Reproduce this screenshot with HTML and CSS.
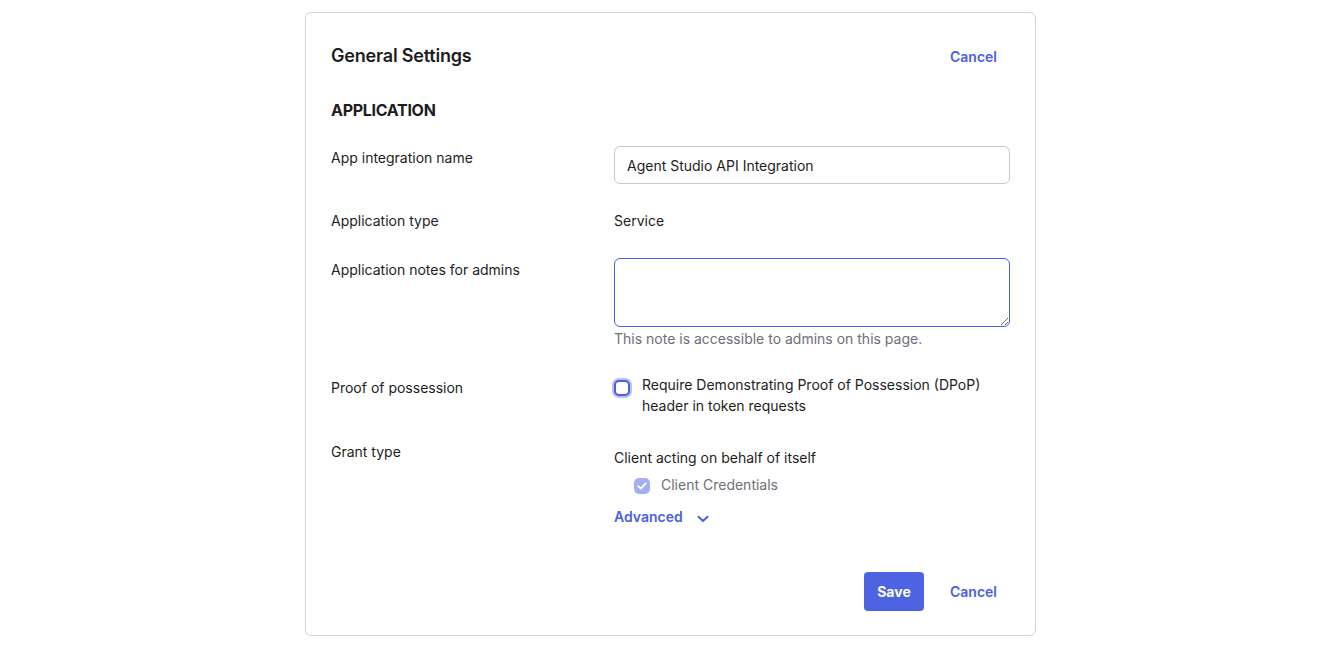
FILE: index.html
```html
<!DOCTYPE html>
<html lang="en">
<head>
<meta charset="utf-8">
<title>General Settings</title>
<link rel="stylesheet" href="styles.css">
</head>
<body>
<div class="card">
  <div class="card-header">
    <h2 class="title">General Settings</h2>
    <button class="link-btn">Cancel</button>
  </div>
  <h3 class="section">APPLICATION</h3>

  <div class="row row-name">
    <div class="label">App integration name</div>
    <div class="field"><input class="text-input" type="text" value="Agent Studio API Integration"></div>
  </div>

  <div class="row row-type">
    <div class="label">Application type</div>
    <div class="field value">Service</div>
  </div>

  <div class="row row-notes">
    <div class="label">Application notes for admins</div>
    <div class="field">
      <textarea class="textarea"></textarea>
      <div class="hint">This note is accessible to admins on this page.</div>
    </div>
  </div>

  <div class="row row-pop">
    <div class="label">Proof of possession</div>
    <div class="field check-row">
      <span class="checkbox"></span>
      <span class="check-text">Require Demonstrating Proof of Possession (DPoP) header in token requests</span>
    </div>
  </div>

  <div class="row row-grant">
    <div class="label">Grant type</div>
    <div class="field grant">
      <div class="grant-title">Client acting on behalf of itself</div>
      <div class="grant-item">
        <span class="checked">
          <svg width="10" height="8" viewBox="0 0 10 8"><path d="M1.2 4.2 L3.8 6.6 L8.8 1.4" fill="none" stroke="#fff" stroke-width="1.8" stroke-linecap="round" stroke-linejoin="round"/></svg>
        </span>
        <span class="grant-label">Client Credentials</span>
      </div>
      <div class="advanced">
        <span>Advanced</span>
        <svg width="12" height="8" viewBox="0 0 12 8"><path d="M1.5 1.8 L6 6 L10.5 1.8" fill="none" stroke="#4b5fe0" stroke-width="2" stroke-linecap="round" stroke-linejoin="round"/></svg>
      </div>
    </div>
  </div>

  <div class="footer">
    <button class="save-btn">Save</button>
    <button class="link-btn">Cancel</button>
  </div>
</div>
</body>
</html>
```

FILE: styles.css
```css
* { box-sizing: border-box; }

body {
  margin: 0;
  background: #ffffff;
  font-family: Inter, "Noto Sans", "Liberation Sans", sans-serif;
  color: #1d1d21;
  font-size: 14px;
}

.card {
  width: 731px;
  height: 624px;
  margin: 12px 0 0 305px;
  border: 1px solid #d4d4d9;
  border-radius: 6px;
  padding: 31px 25px 24px 25px;
  display: flex;
  flex-direction: column;
}

.card-header {
  display: flex;
  justify-content: space-between;
  align-items: center;
  height: 24px;
}

.title {
  margin: 0;
  font-size: 18px;
  font-weight: 600;
  line-height: 24px;
  letter-spacing: -0.2px;
}

.link-btn {
  background: none;
  border: none;
  font-family: inherit;
  font-size: 14px;
  font-weight: 600;
  color: #4b5fe0;
  padding: 0 13px 0 14px;
  height: 39px;
  cursor: pointer;
}

.section {
  margin: 32px 0 0 0;
  font-size: 16px;
  font-weight: 700;
  line-height: 20px;
  letter-spacing: -0.3px;
}

.row {
  display: grid;
  grid-template-columns: 283px 396px;
  align-items: start;
}

.label {
  line-height: 20px;
  padding-top: 1px;
}

.row-name { margin-top: 26px; }
.row-type { margin-top: 26px; }
.row-notes { margin-top: 27px; }
.row-pop { margin-top: 25px; }
.row-grant { margin-top: 25px; }

.row-name .label { padding-top: 2px; }
.row-notes .label { padding-top: 2px; }
.row-pop .label { padding-top: 4px; }

.text-input {
  width: 396px;
  height: 38px;
  border: 1px solid #c8c8cf;
  border-radius: 6px;
  padding: 0 12px;
  font-family: inherit;
  font-size: 14px;
  color: #1d1d21;
  display: block;
}

.value {
  line-height: 20px;
  padding-top: 1px;
}

.textarea {
  display: block;
  width: 396px;
  height: 69px;
  border: 1px solid #4b5fe0;
  border-radius: 6px;
  font-family: inherit;
  font-size: 14px;
  padding: 8px 12px;
  margin: 0;
}

.hint {
  margin-top: 2px;
  line-height: 20px;
  color: #6e6e78;
}

.check-row {
  display: flex;
  align-items: flex-start;
  gap: 12px;
}

.checkbox {
  flex: none;
  width: 16px;
  height: 16px;
  margin-top: 6px;
  border: 2px solid #4b5fe0;
  border-radius: 5px;
  box-shadow: 0 0 0 2px #b8c0f3;
  background: #fff;
}

.check-text {
  line-height: 21px;
  padding-right: 20px;
}

.grant {
  padding-top: 7px;
}

.grant-title {
  line-height: 20px;
}

.grant-item {
  display: flex;
  align-items: center;
  gap: 11px;
  margin-top: 7px;
  padding-left: 20px;
  height: 20px;
}

.checked {
  width: 16px;
  height: 16px;
  border-radius: 5px;
  background: #a4aef1;
  display: flex;
  align-items: center;
  justify-content: center;
  margin-top: 2px;
}

.grant-label {
  color: #6e6e78;
  line-height: 20px;
}

.advanced {
  margin-top: 12px;
  display: flex;
  align-items: center;
  gap: 14px;
  color: #4b5fe0;
  font-weight: 600;
  line-height: 20px;
}

.advanced svg { margin-top: 3px; }

.footer {
  margin-top: auto;
  display: flex;
  justify-content: flex-end;
  gap: 12px;
}

.save-btn {
  width: 60px;
  height: 39px;
  border: none;
  border-radius: 4px;
  background: #4d63e2;
  color: #fff;
  font-family: inherit;
  font-size: 14px;
  font-weight: 700;
  cursor: pointer;
}
```
